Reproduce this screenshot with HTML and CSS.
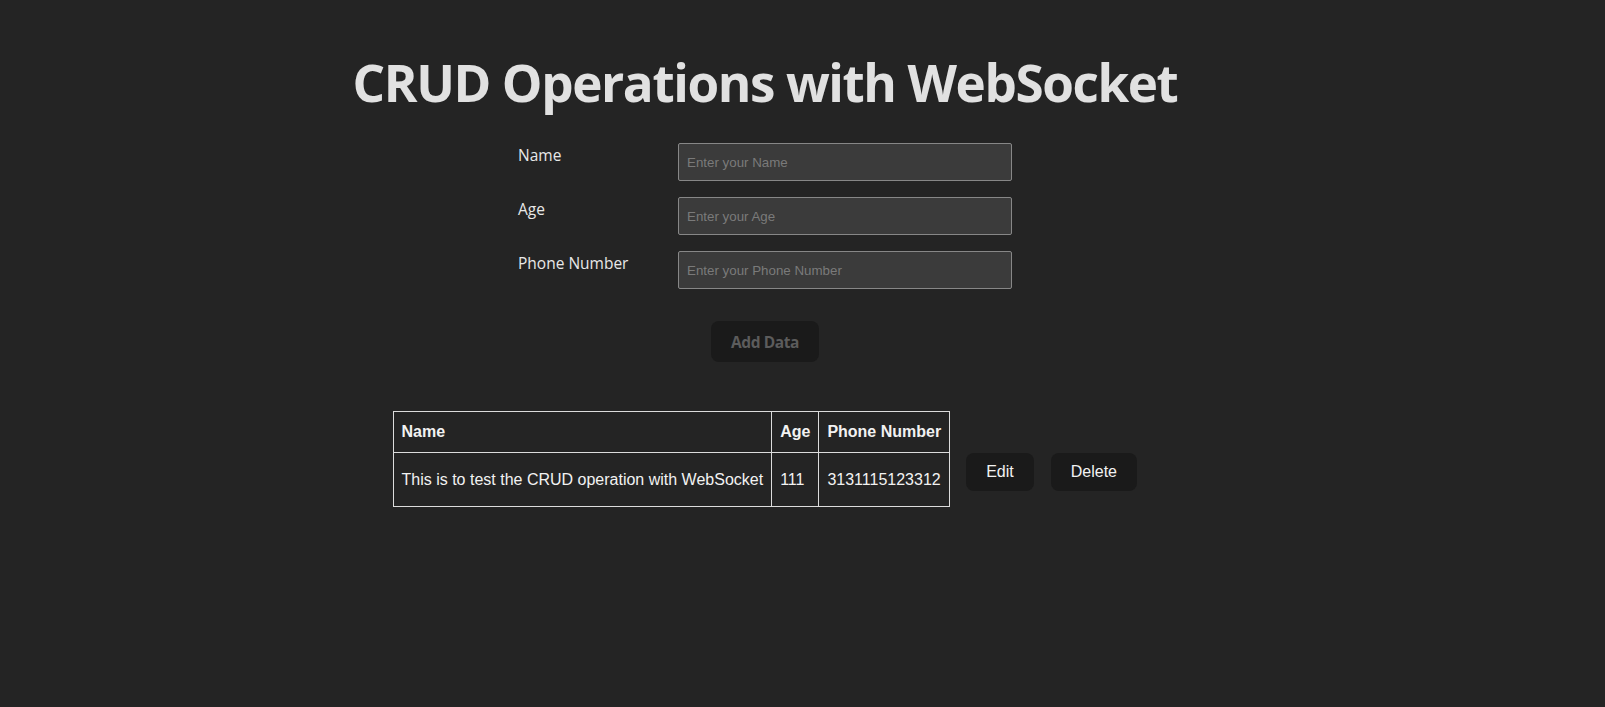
FILE: index.html
```html
<!DOCTYPE html>
<html lang="en">
<head>
<meta charset="utf-8">
<title>CRUD Operations with WebSocket</title>
<link rel="stylesheet" href="styles.css">
</head>
<body>
<main class="app">
  <h1 class="title">CRUD Operations with WebSocket</h1>
  <form class="form">
    <label class="label" for="name">Name</label>
    <input class="input" id="name" type="text" placeholder="Enter your Name">
    <label class="label" for="age">Age</label>
    <input class="input" id="age" type="text" placeholder="Enter your Age">
    <label class="label" for="phone">Phone Number</label>
    <input class="input" id="phone" type="text" placeholder="Enter your Phone Number">
  </form>
  <button class="add-btn" type="button">Add Data</button>
  <table class="data-table">
    <thead>
      <tr>
        <th class="cell">Name</th>
        <th class="cell">Age</th>
        <th class="cell">Phone Number</th>
        <th class="actions-head"></th>
      </tr>
    </thead>
    <tbody>
      <tr>
        <td class="cell">This is to test the CRUD operation with WebSocket</td>
        <td class="cell">111</td>
        <td class="cell">3131115123312</td>
        <td class="actions">
          <div class="action-group">
            <button class="row-btn" type="button">Edit</button>
            <button class="row-btn" type="button">Delete</button>
          </div>
        </td>
      </tr>
    </tbody>
  </table>
</main>
</body>
</html>
```
FILE: styles.css
```css
html, body {
  margin: 0;
  padding: 0;
  background: #242424;
}
body {
  color: rgba(255, 255, 255, 0.87);
  font-family: "Open Sans", "Noto Sans", sans-serif;
  width: 1605px;
  height: 707px;
  overflow: hidden;
}
.app {
  width: 1530px;
  display: flex;
  flex-direction: column;
  align-items: center;
  padding-top: 54px;
}
.title {
  margin: 0;
  font-size: 51.2px;
  line-height: 1.1;
  font-weight: 700;
  letter-spacing: -1.4px;
  color: #e1e1e1;
}
.form {
  margin-top: 33px;
  display: grid;
  grid-template-columns: 160px 334px;
  grid-auto-rows: 38px;
  row-gap: 16px;
}
.label {
  font-size: 15.5px;
  line-height: 24px;
  color: #e8e8e8;
}
.input {
  box-sizing: border-box;
  height: 38px;
  width: 334px;
  margin: 0;
  padding: 0 8px;
  background: #3b3b3b;
  border: 1px solid #878787;
  border-radius: 2px;
  color: #e8e8e8;
  font-family: "Liberation Sans", Arial, sans-serif;
  font-size: 13.33px;
}
.input::placeholder {
  color: #7a7a7a;
}
.add-btn {
  margin-top: 32px;
  box-sizing: border-box;
  width: 108px;
  height: 41px;
  border: 1px solid transparent;
  border-radius: 8px;
  background: #1a1a1a;
  color: #5c5c5c;
  font-family: "Open Sans", "Noto Sans", sans-serif;
  font-size: 15.5px;
  font-weight: 700;
  letter-spacing: -0.4px;
  padding: 0;
}
.data-table {
  margin-top: 49px;
  border-collapse: collapse;
  font-family: "Liberation Sans", Arial, sans-serif;
  font-size: 16px;
  line-height: 24px;
  color: #f2f2f2;
}
.cell {
  border: 1px solid #dcdcdc;
  padding: 8px;
  text-align: left;
  white-space: nowrap;
}
th.cell {
  font-weight: 700;
}
.actions-head {
  padding: 0;
}
.actions {
  vertical-align: top;
  padding: 0 0 16px 16px;
}
.action-group {
  display: flex;
  gap: 17px;
}
.row-btn {
  box-sizing: border-box;
  height: 38px;
  padding: 0 19px;
  border: 1px solid transparent;
  border-radius: 8px;
  background: #1a1a1a;
  color: #f2f2f2;
  font-family: "Liberation Sans", Arial, sans-serif;
  font-size: 16px;
}
```
